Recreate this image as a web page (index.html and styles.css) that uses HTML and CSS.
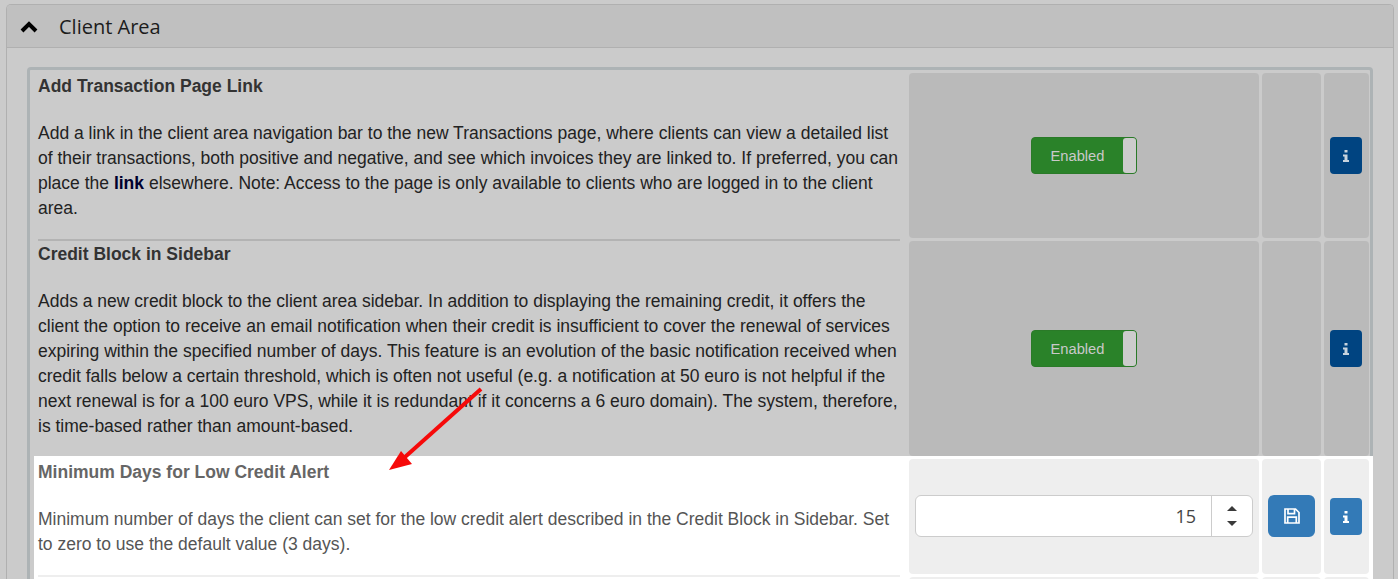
FILE: index.html
```html
<!DOCTYPE html>
<html lang="en">
<head>
    <meta charset="UTF-8">
    <title>Client Area</title>
    <link rel="stylesheet" href="styles.css">
</head>
<body>
    <section class="panel">
        <header class="panel-head">
            <svg class="chevron" viewBox="0 0 18 12" width="18" height="12"><path d="M2 10 9 3l7 7" fill="none" stroke="#000" stroke-width="4"/></svg>
            <h2 class="panel-title">Client Area</h2>
        </header>
        <div class="panel-body">
            <div class="settings">
                <div class="row">
                    <div class="desc">
                        <h3 class="desc-title">Add Transaction Page Link</h3>
                        <p class="desc-text">Add a link in the client area navigation bar to the new Transactions page, where clients can view a detailed list of their transactions, both positive and negative, and see which invoices they are linked to. If preferred, you can place the <b class="desc-link">link</b> elsewhere. Note: Access to the page is only available to clients who are logged in to the client area.</p>
                    </div>
                    <div class="cell cell-main">
                        <div class="toggle"><span class="toggle-label">Enabled</span><span class="toggle-knob"></span></div>
                    </div>
                    <div class="cell cell-save"></div>
                    <div class="cell cell-info">
                        <button class="btn-info"><svg viewBox="0 0 6 12" width="6" height="12"><path d="M1.5 0h3v2.6h-3zM0 4.4h4.5V10H6v2H0v-2h1.5V6.4H0z" fill="currentColor"/></svg></button>
                    </div>
                </div>
                <div class="row">
                    <div class="desc">
                        <h3 class="desc-title">Credit Block in Sidebar</h3>
                        <p class="desc-text">Adds a new credit block to the client area sidebar. In addition to displaying the remaining credit, it offers the client the option to receive an email notification when their credit is insufficient to cover the renewal of services expiring within the specified number of days. This feature is an evolution of the basic notification received when credit falls below a certain threshold, which is often not useful (e.g. a notification at 50 euro is not helpful if the next renewal is for a 100 euro VPS, while it is redundant if it concerns a 6 euro domain). The system, therefore, is time-based rather than amount-based.</p>
                    </div>
                    <div class="cell cell-main">
                        <div class="toggle"><span class="toggle-label">Enabled</span><span class="toggle-knob"></span></div>
                    </div>
                    <div class="cell cell-save"></div>
                    <div class="cell cell-info">
                        <button class="btn-info"><svg viewBox="0 0 6 12" width="6" height="12"><path d="M1.5 0h3v2.6h-3zM0 4.4h4.5V10H6v2H0v-2h1.5V6.4H0z" fill="currentColor"/></svg></button>
                    </div>
                </div>
                <div class="row row-active">
                    <div class="desc">
                        <h3 class="desc-title">Minimum Days for Low Credit Alert</h3>
                        <p class="desc-text">Minimum number of days the client can set for the low credit alert described in the Credit Block in Sidebar. Set to zero to use the default value (3 days).</p>
                    </div>
                    <div class="cell cell-main">
                        <div class="spinner">
                            <span class="spinner-value">15</span>
                            <span class="spinner-arrows"><i class="arrow-up"></i><i class="arrow-down"></i></span>
                        </div>
                    </div>
                    <div class="cell cell-save">
                        <button class="btn-save"><svg viewBox="0 0 16 16" width="16" height="16" fill="none" stroke="currentColor" stroke-width="1.7"><path d="M1 1h10.5L15 4.5V15H1zM4 1v4.6h6.5V1M3.7 15V9.2h8.6V15"/></svg></button>
                    </div>
                    <div class="cell cell-info">
                        <button class="btn-info"><svg viewBox="0 0 6 12" width="6" height="12"><path d="M1.5 0h3v2.6h-3zM0 4.4h4.5V10H6v2H0v-2h1.5V6.4H0z" fill="currentColor"/></svg></button>
                    </div>
                </div>
                <div class="row row-active row-next">
                    <div class="desc"></div>
                    <div class="cell cell-main"></div>
                    <div class="cell cell-save"></div>
                    <div class="cell cell-info"></div>
                </div>
            </div>
        </div>
    </section>

    <!-- red annotation arrow -->
    <svg class="annotation" viewBox="0 0 1398 579" width="1398" height="579">
        <path d="M481 389 405 457" stroke="#f60a0a" stroke-width="4" fill="none"/>
        <path d="M389 470 401 451 412 464z" fill="#f60a0a"/>
    </svg>
</body>
</html>
```

FILE: styles.css
```css
* { box-sizing: border-box; }

html, body { height: 100%; overflow: hidden; }
body {
    margin: 0;
    padding: 4px 4px 0 6px;
    background-color: #cbcbcb;
    font-family: "Liberation Sans", Arial, sans-serif;
    font-size: 17.5px;
    line-height: 25px;
    color: #222;
}

/* --- Panel --- */
.panel {
    border: 1px solid #b0b0b0;
    border-bottom: 0;
    border-radius: 5px 5px 0 0;
}
.panel-head {
    display: flex;
    align-items: center;
    height: 43px;
    padding-left: 13px;
    background-color: #c0c0c0;
    border-bottom: 1px solid #b0b0b0;
    border-radius: 4px 4px 0 0;
}
.chevron { margin-top: 2px; }
.panel-title {
    margin: 0 0 0 21px;
    font-family: "Open Sans", sans-serif;
    font-size: 20px;
    font-weight: 400;
    color: #1c1c1c;
}
.panel-body { padding: 19px 20px 0; }

/* --- Settings list --- */
.settings {
    border: 3px solid #adb3b5;
    border-bottom: 0;
    border-radius: 4px 4px 0 0;
    padding-left: 4px;
}
.row {
    display: flex;
    margin-right: -3px;
    padding: 0 4px 0 4px;
}
.desc {
    width: 862px;
    margin-top: 1px;
    margin-right: 9px;
    padding-top: 1px;
    padding-bottom: 17px;
    border-top: 2px solid #b3b3b3;
}
.row:first-child .desc { border-top-color: transparent; }
.desc-title {
    margin: 0 0 22px;
    font-size: 17.5px;
    line-height: 25px;
    color: #333;
}
.desc-text { margin: 0; }
.desc-link { color: #00002e; }

.cell {
    display: flex;
    align-items: center;
    justify-content: center;
    margin-top: 3px;
    background-color: #bababa;
    border-radius: 4px;
}
.cell-main { width: 350px; margin-right: 3px; }
.cell-save { width: 59px; margin-right: 3px; }
.cell-info { width: 45px; }

/* --- Highlighted row --- */
.row-active { background-color: #fff; }
.row-active .desc { border-top-color: transparent; color: #555; }
.row-active .desc-title { color: #666; }
.row-active .cell { background-color: #eee; }
.row-next { height: 100px; }
.row-next .desc { border-top-color: #eee; }

/* --- Controls --- */
.toggle {
    display: flex;
    width: 106px;
    height: 37px;
    border: 1px solid #2a7a28;
    border-radius: 4px;
    background-color: #2a8229;
    overflow: hidden;
}
.toggle-label {
    flex: 1;
    font-family: "Liberation Sans", Arial, sans-serif;
    font-size: 14.7px;
    line-height: 36px;
    text-align: center;
    color: #c9c9c9;
}
.toggle-knob {
    width: 13px;
    background-color: #ccc;
    border-radius: 3px 0 0 3px;
}

.btn-info,
.btn-save {
    display: flex;
    align-items: center;
    justify-content: center;
    padding: 0;
    border: 1px solid transparent;
}
.btn-info {
    width: 32px;
    height: 37px;
    margin-right: 2px;
    border-radius: 4px;
    background-color: #004481;
    color: #c8d4de;
}
.row-active .btn-info { background-color: #337ab7; color: #fff; }
.btn-save {
    width: 47px;
    height: 42px;
    margin-bottom: 1px;
    border-radius: 6px;
    background-color: #337ab7;
    color: #fff;
}

.spinner {
    display: flex;
    width: 338px;
    height: 42px;
    margin-bottom: 1px;
    border: 1px solid #ccc;
    border-radius: 6px;
    background-color: #fff;
}
.spinner-value {
    flex: 1;
    padding-right: 15px;
    font-family: "Open Sans", sans-serif;
    font-size: 18px;
    line-height: 40px;
    text-align: right;
    color: #444;
}
.spinner-arrows {
    display: flex;
    flex-direction: column;
    align-items: center;
    justify-content: center;
    gap: 10px;
    width: 41px;
    border-left: 1px solid #ccc;
}
.arrow-up,
.arrow-down {
    width: 0;
    height: 0;
    border-left: 5px solid transparent;
    border-right: 5px solid transparent;
}
.arrow-up { border-bottom: 5px solid #3a3a3a; }
.arrow-down { border-top: 5px solid #3a3a3a; }

/* --- Annotation over the page --- */
.annotation {
    position: absolute;
    top: 0;
    left: 0;
    pointer-events: none;
}
```
